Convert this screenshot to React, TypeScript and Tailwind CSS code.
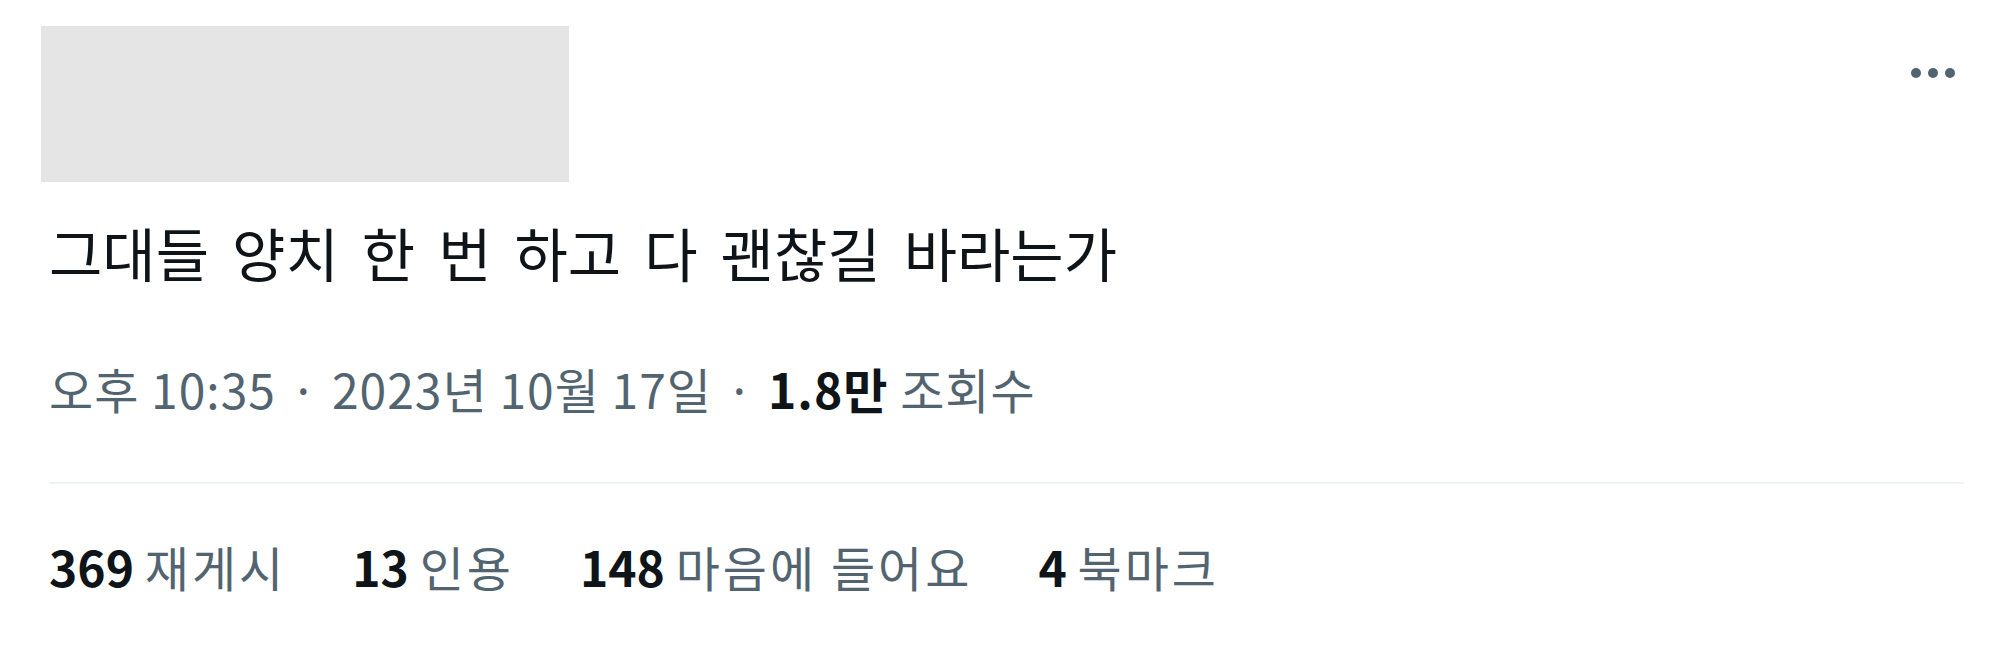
import { MoreHorizontal } from "lucide-react";

const STATS = [
  { count: "369", label: "재게시" },
  { count: "13", label: "인용" },
  { count: "148", label: "마음에 들어요" },
  { count: "4", label: "북마크" },
];

export default function App() {
  return (
    <div className="w-[2000px] h-[650px] bg-white overflow-hidden font-['Noto_Sans_CJK_KR',sans-serif] text-[#0f1419]">
      <div className="flex items-start justify-between pl-[41px] pr-[44px] pt-[26px]">
        {/* hidden profile, greyed out */}
        <div className="w-[528px] h-[156px] bg-[#e5e5e5]" />
        <button className="mt-[41px] text-[#536471]" aria-label="more">
          <svg width="46" height="12" viewBox="0 0 46 12">
            <circle cx="6" cy="6" r="5" fill="currentColor" />
            <circle cx="23" cy="6" r="5" fill="currentColor" />
            <circle cx="40" cy="6" r="5" fill="currentColor" />
          </svg>
        </button>
      </div>

      <div className="pl-[49px] pr-[36px]">
        <p className="mt-[34px] text-[58px] leading-[72px] [word-spacing:10px]">
          그대들 양치 한 번 하고 다 괜찮길 바라는가
        </p>

        <div className="mt-[70px] text-[48px] leading-[60px] tracking-[1px] text-[#536471] flex items-center">
          <span>오후 10:35</span>
          <span className="mx-[14px]">·</span>
          <span>2023년 10월 17일</span>
          <span className="mx-[14px]">·</span>
          <span>
            <span className="font-bold text-[#0f1419]">1.8만</span> 조회수
          </span>
        </div>

        <div className="mt-[64px] h-[2px] bg-[#eff3f4]" />

        <div className="mt-[52px] flex gap-[66px] text-[48px] leading-[60px]">
          {STATS.map((s) => (
            <span key={s.label}>
              <span className="font-bold">{s.count}</span>{" "}
              <span className="text-[#536471] tracking-[3px]">{s.label}</span>
            </span>
          ))}
        </div>
      </div>
    </div>
  );
}
